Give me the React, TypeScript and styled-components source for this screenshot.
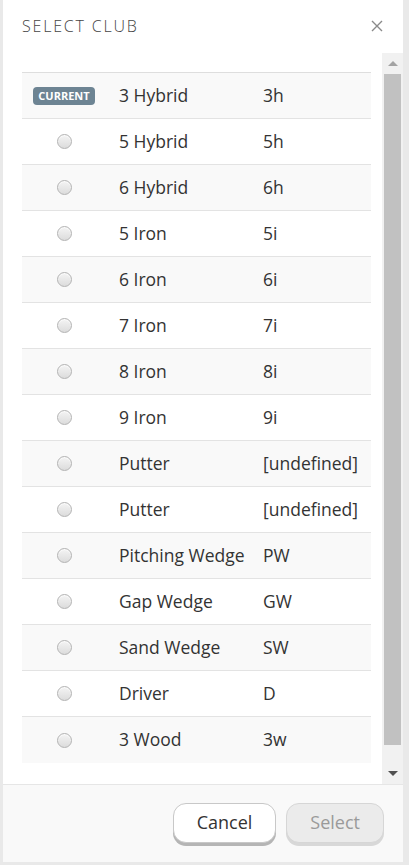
import React from "react";
import styled, { createGlobalStyle } from "styled-components";

const GlobalStyle = createGlobalStyle`
  html, body {
    margin: 0;
    padding: 0;
    background: #e9e9e9;
  }
  body {
    font-family: "Open Sans", "Liberation Sans", sans-serif;
    color: #333;
  }
`;

const Page = styled.div`
  padding: 0 6px 3px 3px;
`;

const Modal = styled.div`
  width: 400px;
  height: 862px;
  background: #fff;
  display: flex;
  flex-direction: column;
`;

const Header = styled.div`
  height: 53px;
  flex: none;
  display: flex;
  align-items: flex-start;
  justify-content: space-between;
  padding: 15px 20px 0 19px;
  box-sizing: border-box;
`;

const Title = styled.h4`
  margin: 0;
  font-size: 16px;
  font-weight: 300;
  letter-spacing: 1.8px;
  color: #444;
`;

const CloseButton = styled.button`
  background: none;
  border: none;
  padding: 0;
  margin-top: 5px;
  color: #8a8a8a;
  cursor: pointer;
  line-height: 0;
`;

const Body = styled.div`
  flex: 1;
  display: flex;
  min-height: 0;
`;

const ListArea = styled.div`
  flex: 1;
  padding: 19px 11px 0 19px;
  overflow: hidden;
`;

const Table = styled.div`
  border-top: 1px solid #dedede;
`;

const Row = styled.div<{ $striped: boolean }>`
  display: grid;
  grid-template-columns: 84px 144px 1fr;
  align-items: center;
  height: 46px;
  box-sizing: border-box;
  border-bottom: 1px solid #e3e3e3;
  background: ${(p) => (p.$striped ? "#f9f9f9" : "#fff")};
  &:last-child {
    border-bottom: none;
  }
`;

const SelectCell = styled.div`
  display: flex;
  justify-content: center;
  align-items: center;
`;

const Cell = styled.div`
  padding: 0 0 2px 13px;
  font-size: 17.5px;
  color: #333;
  white-space: nowrap;
`;

const Badge = styled.span`
  display: inline-block;
  background: #6d8493;
  color: #fff;
  font-size: 11px;
  font-weight: 700;
  line-height: 18px;
  padding: 0 5px;
  border-radius: 4px;
`;

const Radio = styled.span`
  width: 13px;
  height: 13px;
  border-radius: 50%;
  border: 1px solid #b3b3b3;
  background: linear-gradient(#f4f4f4, #dcdcdc);
  box-shadow: inset 0 1px 1px rgba(255, 255, 255, 0.8);
`;

const Scrollbar = styled.div`
  width: 21px;
  flex: none;
  background: #f1f1f1;
  display: flex;
  flex-direction: column;
  align-items: center;
`;

const ArrowBox = styled.div`
  height: 21px;
  width: 100%;
  display: flex;
  align-items: center;
  justify-content: center;
  flex: none;
`;

const Arrow = styled.span<{ $down?: boolean; $color: string }>`
  width: 0;
  height: 0;
  border-left: 5px solid transparent;
  border-right: 5px solid transparent;
  ${(p) =>
    p.$down
      ? `border-top: 5px solid ${p.$color};`
      : `border-bottom: 5px solid ${p.$color};`}
`;

const Track = styled.div`
  flex: 1;
  width: 100%;
  padding: 0 2px 18px;
  box-sizing: border-box;
  display: flex;
`;

const Thumb = styled.div`
  flex: 1;
  background: #c1c1c1;
`;

const Footer = styled.div`
  height: 78px;
  flex: none;
  box-sizing: border-box;
  border-top: 1px solid #e6e6e6;
  background: #f9f9f9;
  display: flex;
  justify-content: flex-end;
  align-items: flex-start;
  gap: 10px;
  padding: 18px 19px 0;
`;

const Button = styled.button<{ $disabled?: boolean }>`
  height: 40px;
  box-sizing: border-box;
  padding: 0 23px 2px;
  font-family: inherit;
  font-size: 18px;
  border-radius: 13px;
  border: 1px solid ${(p) => (p.$disabled ? "#d6d6d6" : "#c8c8c8")};
  background: ${(p) => (p.$disabled ? "#ebebeb" : "#fff")};
  color: ${(p) => (p.$disabled ? "#9a9a9a" : "#333")};
  box-shadow: 0 3px 0 ${(p) => (p.$disabled ? "#d8d8d8" : "#b5b5b5")};
  cursor: ${(p) => (p.$disabled ? "default" : "pointer")};
`;

type Club = { name: string; code: string; current?: boolean };

const clubs: Club[] = [
  { name: "3 Hybrid", code: "3h", current: true },
  { name: "5 Hybrid", code: "5h" },
  { name: "6 Hybrid", code: "6h" },
  { name: "5 Iron", code: "5i" },
  { name: "6 Iron", code: "6i" },
  { name: "7 Iron", code: "7i" },
  { name: "8 Iron", code: "8i" },
  { name: "9 Iron", code: "9i" },
  { name: "Putter", code: "[undefined]" },
  { name: "Putter", code: "[undefined]" },
  { name: "Pitching Wedge", code: "PW" },
  { name: "Gap Wedge", code: "GW" },
  { name: "Sand Wedge", code: "SW" },
  { name: "Driver", code: "D" },
  { name: "3 Wood", code: "3w" },
];

export default function App() {
  return (
    <Page>
      <GlobalStyle />
      <Modal>
        <Header>
          <Title>SELECT CLUB</Title>
          <CloseButton aria-label="Close">
            <svg width="12" height="12" viewBox="0 0 12 12">
              <path d="M1 1 L11 11 M11 1 L1 11" stroke="currentColor" strokeWidth="1.4" />
            </svg>
          </CloseButton>
        </Header>
        <Body>
          <ListArea>
            <Table>
              {clubs.map((club, i) => (
                <Row key={i} $striped={i % 2 === 0}>
                  <SelectCell>
                    {club.current ? <Badge>CURRENT</Badge> : <Radio />}
                  </SelectCell>
                  <Cell>{club.name}</Cell>
                  <Cell>{club.code}</Cell>
                </Row>
              ))}
            </Table>
          </ListArea>
          <Scrollbar>
            <ArrowBox>
              <Arrow $color="#a3a3a3" />
            </ArrowBox>
            <Track>
              <Thumb />
            </Track>
            <ArrowBox>
              <Arrow $down $color="#505050" />
            </ArrowBox>
          </Scrollbar>
        </Body>
        <Footer>
          <Button>Cancel</Button>
          <Button $disabled>Select</Button>
        </Footer>
      </Modal>
    </Page>
  );
}
